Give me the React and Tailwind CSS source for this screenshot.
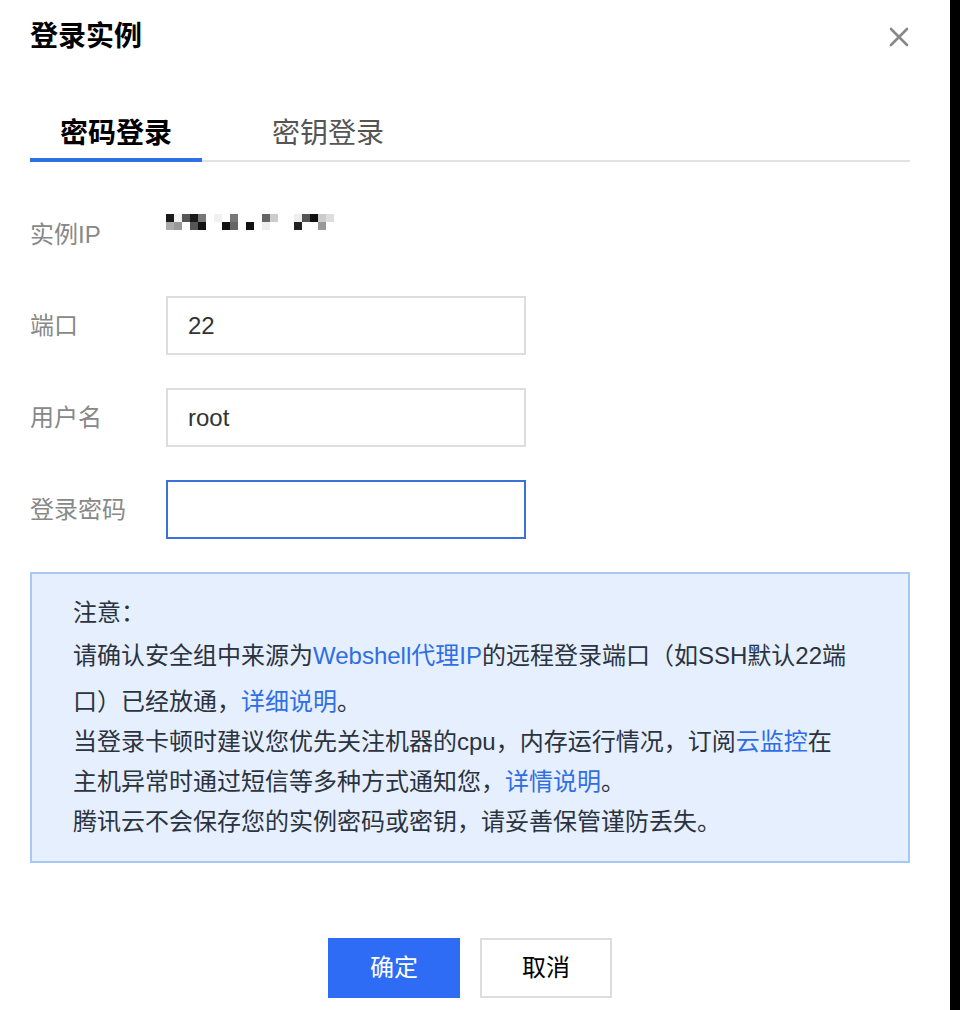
import React from 'react';

const font = { fontFamily: '"Liberation Sans", "Noto Sans CJK SC", sans-serif' };

// mosaic cells of the blurred IP: [col, row, colour]
const ipCells = [
    [0, 0, '#1a1a1a'], [1, 0, '#f2f2f2'], [2, 0, '#555'], [3, 0, '#1a1a1a'], [4, 0, '#777'],
    [6, 0, '#f0f0f0'], [8, 0, '#777'], [12, 0, '#666'], [13, 0, '#ccc'],
    [16, 0, '#eee'], [17, 0, '#555'], [18, 0, '#111'], [19, 0, '#ccc'], [20, 0, '#ddd'],
    [0, 1, '#aaa'], [1, 1, '#999'], [3, 1, '#555'], [4, 1, '#111'],
    [7, 1, '#111'], [8, 1, '#666'], [10, 1, '#111'], [12, 1, '#eee'],
    [16, 1, '#222'], [19, 1, '#999'],
];

const IpMosaic = () => (
    <svg width="168" height="16" viewBox="0 0 168 16" className='shrink-0'>
        {ipCells.map(([c, r, fill], i) => (
            <rect key={i} x={c * 8} y={r * 8} width="8" height="8" fill={fill} />
        ))}
    </svg>
);

const Field = ({ label, value, active }) => (
    <div className='flex items-center'>
        <span className='w-[136px] text-[24px] text-[#888]'>{label}</span>
        <input
            readOnly
            defaultValue={value}
            className={`w-[360px] h-[59px] px-[20px] text-[24px] text-[#333] bg-white outline-none border-2 ${active ? 'border-[#3a72d8]' : 'border-[#ddd]'}`}
            style={font}
        />
    </div>
);

const Link = ({ children }) => <span className='text-[#2f6ee6]'>{children}</span>;

export default function App() {
    return (
        <div className='w-[960px] h-[1010px] flex bg-black' style={font}>
            <div className='w-[950px] h-full bg-white px-[30px]'>
                <div className='w-[880px]'>
                    <header className='h-[74px] flex items-center justify-between'>
                        <h1 className='text-[28px] font-bold text-black leading-none'>登录实例</h1>
                        <svg width="20" height="20" viewBox="0 0 20 20" className='mr-[1px]'>
                            <path d="M2 2 L18 18 M18 2 L2 18" stroke="#888" strokeWidth="2.6" strokeLinecap="round" />
                        </svg>
                    </header>

                    <div className='mt-[38px] flex gap-[40px] border-b-2 border-[#e2e2e2]'>
                        <div className='px-[30px] pt-[2px] pb-[4px] leading-[40px] text-[28px] font-bold text-black border-b-4 border-[#2f6ee6] -mb-[2px]'>
                            密码登录
                        </div>
                        <div className='px-[30px] pt-[2px] pb-[4px] leading-[40px] text-[28px] text-[#555]'>
                            密钥登录
                        </div>
                    </div>

                    <div className='mt-[53px] flex items-start'>
                        <span className='w-[136px] leading-[40px] text-[24px] text-[#888]'>实例IP</span>
                        <div className='-mt-[1px]'>
                            <IpMosaic />
                        </div>
                    </div>

                    <div className='mt-[41px] flex flex-col gap-[33px]'>
                        <Field label='端口' value='22' />
                        <Field label='用户名' value='root' />
                        <Field label='登录密码' value='' active />
                    </div>

                    <div className='mt-[33px] h-[291px] bg-[#e6effd] border-2 border-[#a9c7f3] px-[41px] pt-[19px] text-[24px] leading-[40px] text-[#2b3340] whitespace-nowrap'>
                        <div>注意：</div>
                        <div className='mt-[3px]'>请确认安全组中来源为<Link>Webshell代理IP</Link>的远程登录端口（如SSH默认22端</div>
                        <div className='mt-[6px]'>口）已经放通，<Link>详细说明</Link>。</div>
                        <div>当登录卡顿时建议您优先关注机器的cpu，内存运行情况，订阅<Link>云监控</Link>在</div>
                        <div>主机异常时通过短信等多种方式通知您，<Link>详情说明</Link>。</div>
                        <div>腾讯云不会保存您的实例密码或密钥，请妥善保管谨防丢失。</div>
                    </div>

                    <div className='mt-[75px] flex justify-center gap-[20px]'>
                        <button className='w-[132px] h-[60px] bg-[#2e6cf6] text-white text-[24px]'>确定</button>
                        <button className='w-[132px] h-[60px] bg-white border-2 border-[#ddd] text-black text-[24px]'>取消</button>
                    </div>
                </div>
            </div>
        </div>
    );
}
